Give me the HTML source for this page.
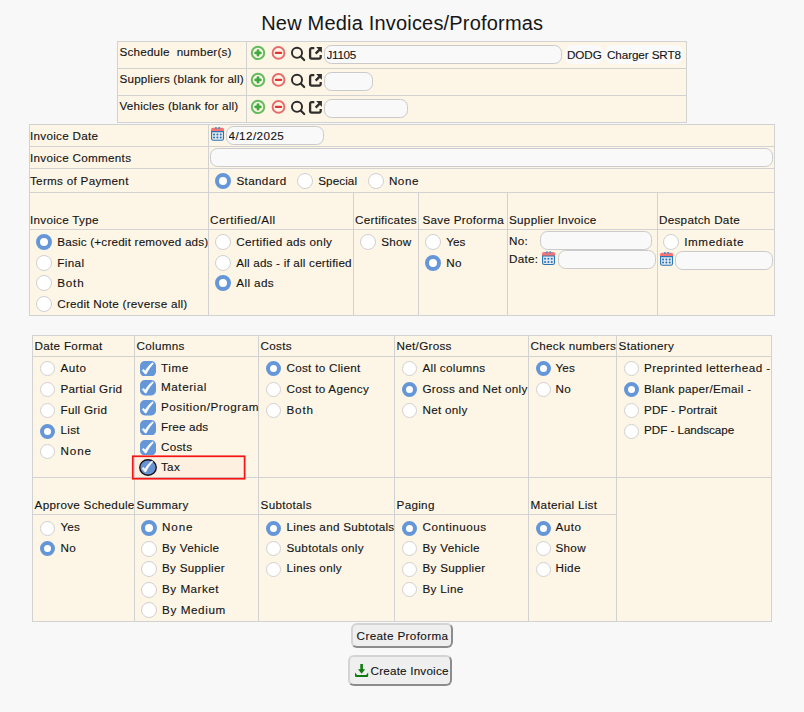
<!DOCTYPE html>
<html lang="en">
<head>
<meta charset="utf-8">
<title>New Media Invoices/Proformas</title>
<style>
html,body{margin:0;padding:0}
body{width:804px;height:712px;position:relative;overflow:hidden;background:#f8f8f8;color:#141414;
  font-family:"Liberation Sans","DejaVu Sans",sans-serif;font-size:11.7px;letter-spacing:0.28px;line-height:15px;-webkit-text-stroke:0.12px #141414}
h1{position:absolute;left:0;top:11px;width:804px;margin:0;text-align:center;font-weight:normal;
  font-size:20px;line-height:24px;color:#161616;-webkit-text-stroke:0;letter-spacing:.19px;padding-left:0.5px;box-sizing:border-box}
table{position:absolute;border-collapse:separate;border-spacing:0;table-layout:fixed;
  border-top:1px solid #d2d2d2;border-left:1px solid #d2d2d2;margin:0}
td,th{border-right:1px solid #d2d2d2;border-bottom:1px solid #d2d2d2;background:#fdf5e6;padding:0;
  font-weight:normal;text-align:left;vertical-align:top;white-space:nowrap;overflow:hidden;box-sizing:border-box}
input[type=text]{box-sizing:border-box;height:19px;margin:0;padding:0 2px 0 1.5px;border:1px solid #cacaca;border-radius:7.5px;
  background:#f9f9f9;font:inherit;color:#141414;vertical-align:top;outline:none}
svg{display:inline-block;vertical-align:top}
input[type=radio]{-webkit-appearance:none;appearance:none;box-sizing:border-box;width:15px;height:15px;margin:0 6px 0 5px;
  border:1px solid #d1d1d1;border-radius:50%;background:#fff;vertical-align:middle;position:relative;top:-1px;outline:none}
#t3 input[type=radio]{top:0;margin-right:5.5px}
#t3 .c5 input[type=radio]{margin-right:4.5px}
#t3 .c6 input[type=radio]{margin-right:5px}
input[type=radio]:checked{border:4px solid #6597d8;background:#fff}
label{display:block;white-space:nowrap}
/* table 1 */
#t1{left:117px;top:41px;width:570px}
#t1 td{height:27px}
#t1 td.l{padding:1.5px 0 0 1.5px;letter-spacing:.19px}
#t1 td.c{padding:3px 0 0 3px;font-size:0}
#t1 td.c svg.ic{margin-right:2px}
#t1 td.c svg{margin-top:0}
#t1 td.c input{font-size:11.7px}
.ro{display:inline-block;box-sizing:border-box;height:19px;line-height:19px;padding:0 0 0 2px;text-align:left;letter-spacing:-0.1px;border-radius:7px;background:#fafafa;font-size:11.7px;vertical-align:top}
/* table 2 */
#t2{left:29px;top:124px;width:746px}
#t2 td.l{padding-left:0}
#t2 .opt{padding:2px 0 0 1px}
#t2 .opt label{height:20.7px;line-height:20.7px}
#t2 .opt label:last-child,#t3 .opt label:last-child{height:17px}
#t2 input[type=radio]{width:16px;height:16px;margin-right:5.2px;top:-1px}
#t2 .terms label{font-size:11.7px;vertical-align:top}
#t2 .hd{height:37px;padding:0 0 2px 1px}
/* table 3 */
#t3{left:32px;top:335px;width:740px}
#t3 .opt{padding:1px 0 0 2px}
#t3 .opt label{height:20.75px;line-height:20.75px}
#t3 .o2 label{height:20.6px;line-height:20.6px}
#t3 .hd{padding:0 0 3px 1.6px}
#t3 .h2 .hd{padding-bottom:2px}
.hd{vertical-align:bottom}
/* checkbox */
#t3 .opt label.ck{position:relative;height:19.75px;line-height:19.75px}
#t3 .cols{padding-top:0}
#t3 .cols label.ck{top:0.5px}
#t3 .opt label.foc{padding-top:1px}
#t3 .opt label.foc svg{top:-1px}
#t3 .o2{padding-top:2.2px}
#t3 .o2b input[type=radio]{width:16px;height:16px;margin-left:4px;margin-right:5px}
#hl{position:absolute;left:130px;top:454px;pointer-events:none}
.ck input{position:absolute;opacity:0;width:1px;height:1px;margin:0}
.ck svg{vertical-align:middle;margin:0 5px 0 3px;position:relative;top:0}
button{position:absolute;box-sizing:border-box;margin:0;padding:0;font:inherit;color:#141414;background:#efefef;
  border:2px solid;border-color:#d4d4d4 #8c8c8c #8c8c8c #d4d4d4;border-radius:6px;text-align:center;white-space:nowrap}
</style>
</head>
<body>
<h1>New Media Invoices/Proformas</h1>

<table id="t1">
<colgroup><col style="width:129px"><col style="width:440px"></colgroup>
<tr><td class="l">Schedule&nbsp; number(s)</td><td class="c"><svg class="ic" width="72" height="17" viewBox="0 0 72 17"><circle cx="8" cy="7.9" r="6.2" fill="none" stroke="#66bc60" stroke-width="2"/><path d="M8 5.6v4.6M5.7 7.9h4.6" stroke="#3caa3c" stroke-width="2.8" stroke-linecap="round" fill="none"/><circle cx="28.5" cy="7.9" r="5.9" fill="none" stroke="#e96a6a" stroke-width="1.9"/><path d="M25.9 7.9h5.2" stroke="#e23434" stroke-width="2.2" stroke-linecap="round" fill="none"/><circle cx="47" cy="7.8" r="5.05" fill="none" stroke="#2c2c2c" stroke-width="1.95"/><path d="M50.7 11.5L54.2 15.1" stroke="#2c2c2c" stroke-width="2.1" stroke-linecap="round" fill="none"/><path d="M64.3 3.2H61.7a1.6 1.6 0 0 0-1.6 1.6v7.2a1.6 1.6 0 0 0 1.6 1.6h7.4a1.6 1.6 0 0 0 1.6-1.6V10" fill="none" stroke="#2e2e2e" stroke-width="2.3"/><path d="M66.2 2h5.7v5.8l-1.9-1.9-3.5 3.6-1.7-1.7 3.5-3.6z" fill="#2e2e2e"/></svg><input type="text" value="J1105" style="width:238px;letter-spacing:-0.3px"><span class="ro" style="margin-left:3px;width:38px">DODG</span><span class="ro" style="margin-left:2px;width:78px">Charger SRT8</span></td></tr>
<tr><td class="l">Suppliers (blank for all)</td><td class="c"><svg class="ic" width="72" height="17" viewBox="0 0 72 17"><circle cx="8" cy="7.9" r="6.2" fill="none" stroke="#66bc60" stroke-width="2"/><path d="M8 5.6v4.6M5.7 7.9h4.6" stroke="#3caa3c" stroke-width="2.8" stroke-linecap="round" fill="none"/><circle cx="28.5" cy="7.9" r="5.9" fill="none" stroke="#e96a6a" stroke-width="1.9"/><path d="M25.9 7.9h5.2" stroke="#e23434" stroke-width="2.2" stroke-linecap="round" fill="none"/><circle cx="47" cy="7.8" r="5.05" fill="none" stroke="#2c2c2c" stroke-width="1.95"/><path d="M50.7 11.5L54.2 15.1" stroke="#2c2c2c" stroke-width="2.1" stroke-linecap="round" fill="none"/><path d="M64.3 3.2H61.7a1.6 1.6 0 0 0-1.6 1.6v7.2a1.6 1.6 0 0 0 1.6 1.6h7.4a1.6 1.6 0 0 0 1.6-1.6V10" fill="none" stroke="#2e2e2e" stroke-width="2.3"/><path d="M66.2 2h5.7v5.8l-1.9-1.9-3.5 3.6-1.7-1.7 3.5-3.6z" fill="#2e2e2e"/></svg><input type="text" style="width:49px"></td></tr>
<tr><td class="l">Vehicles (blank for all)</td><td class="c"><svg class="ic" width="72" height="17" viewBox="0 0 72 17"><circle cx="8" cy="7.9" r="6.2" fill="none" stroke="#66bc60" stroke-width="2"/><path d="M8 5.6v4.6M5.7 7.9h4.6" stroke="#3caa3c" stroke-width="2.8" stroke-linecap="round" fill="none"/><circle cx="28.5" cy="7.9" r="5.9" fill="none" stroke="#e96a6a" stroke-width="1.9"/><path d="M25.9 7.9h5.2" stroke="#e23434" stroke-width="2.2" stroke-linecap="round" fill="none"/><circle cx="47" cy="7.8" r="5.05" fill="none" stroke="#2c2c2c" stroke-width="1.95"/><path d="M50.7 11.5L54.2 15.1" stroke="#2c2c2c" stroke-width="2.1" stroke-linecap="round" fill="none"/><path d="M64.3 3.2H61.7a1.6 1.6 0 0 0-1.6 1.6v7.2a1.6 1.6 0 0 0 1.6 1.6h7.4a1.6 1.6 0 0 0 1.6-1.6V10" fill="none" stroke="#2e2e2e" stroke-width="2.3"/><path d="M66.2 2h5.7v5.8l-1.9-1.9-3.5 3.6-1.7-1.7 3.5-3.6z" fill="#2e2e2e"/></svg><input type="text" style="width:84px"></td></tr>
</table>

<table id="t2">
<colgroup><col style="width:179px"><col style="width:145px"><col style="width:65px"><col style="width:89px"><col style="width:150px"><col style="width:117px"></colgroup>
<tr style="height:22px"><td class="l" style="padding-top:3px">Invoice Date</td><td colspan="5" style="padding:1px 0 0 2px;font-size:0"><svg class="cal" width="14" height="14" viewBox="0 0 14 14" style="margin-top:1px"><path d="M0 4.8V2.6a1.8 1.8 0 0 1 1.8-1.8h9.5a1.8 1.8 0 0 1 1.8 1.8v2.2z" fill="#fb7272"/><rect x="4" y="0" width="1.8" height="2.1" rx="0.6" fill="#4a90c8"/><rect x="7.3" y="0" width="1.8" height="2.1" rx="0.6" fill="#4a90c8"/><path d="M0.55 4.65h11.95v6.8a1.8 1.8 0 0 1-1.8 1.8h-8.35a1.8 1.8 0 0 1-1.8-1.8z" fill="#e4e9ee" stroke="#2a76b4" stroke-width="1.1"/><circle cx="3.05" cy="7.4" r="1" fill="#2172b9"/><circle cx="6.4" cy="7.4" r="1" fill="#2172b9"/><circle cx="9.75" cy="7.4" r="1" fill="#2172b9"/><circle cx="3.05" cy="10.6" r="1" fill="#2172b9"/><circle cx="6.4" cy="10.6" r="1" fill="#2172b9"/><circle cx="9.75" cy="10.6" r="1" fill="#2172b9"/></svg><input type="text" value="4/12/2025" style="width:98px;margin-left:1px;font-size:11.7px;letter-spacing:.42px"></td></tr>
<tr style="height:22px"><td class="l" style="padding-top:3px">Invoice Comments</td><td colspan="5" style="padding:1px 0 0 1px"><input type="text" style="width:563px"></td></tr>
<tr style="height:24px"><td class="l" style="padding-top:4px">Terms of Payment</td><td colspan="5" class="terms" style="padding:1px 0 0 1px;line-height:21px;font-size:0"><label style="display:inline-block;width:82.1px"><input type="radio" name="terms" checked style="margin-right:5.4px"><span style="letter-spacing:.35px">Standard</span></label><label style="display:inline-block;width:70.6px"><input type="radio" name="terms" style="margin-right:5.1px"><span style="letter-spacing:.08px">Special</span></label><label style="display:inline-block"><input type="radio" name="terms" style="margin-right:5.2px"><span style="letter-spacing:.55px">None</span></label></td></tr>
<tr><th class="hd" style="padding-left:0">Invoice Type</th><th class="hd" style="letter-spacing:.45px">Certified/All</th><th class="hd">Certificates</th><th class="hd" style="padding-left:3.5px">Save Proforma</th><th class="hd">Supplier Invoice</th><th class="hd">Despatch Date</th></tr>
<tr style="height:86px">
<td class="opt"><label><input type="radio" name="itype" checked><span style="letter-spacing:.2px">Basic (+credit removed ads)</span></label><label><input type="radio" name="itype"><span style="letter-spacing:0.4px">Final</span></label><label><input type="radio" name="itype"><span style="letter-spacing:0.8px">Both</span></label><label><input type="radio" name="itype"><span style="letter-spacing:0.25px">Credit Note (reverse all)</span></label></td>
<td class="opt"><label><input type="radio" name="cert"><span style="letter-spacing:0.32px">Certified ads only</span></label><label><input type="radio" name="cert"><span style="letter-spacing:0.2px">All ads - if all certified</span></label><label><input type="radio" name="cert" checked><span style="letter-spacing:0.4px">All ads</span></label></td>
<td class="opt"><label><input type="radio" name="certs">Show</label></td>
<td class="opt"><label><input type="radio" name="savep"><span style="letter-spacing:0.1px">Yes</span></label><label><input type="radio" name="savep" checked>No</label></td>
<td style="padding:1px 0 0 1px"><div style="height:19px;line-height:19px">No:<input type="text" style="width:112px;margin-left:12px"></div><div style="height:19px;line-height:17px">Date:<svg class="cal" width="14" height="14" viewBox="0 0 14 14" style="margin:1px 2px 0 4px;width:14px;height:14.6px"><path d="M0 4.8V2.6a1.8 1.8 0 0 1 1.8-1.8h9.5a1.8 1.8 0 0 1 1.8 1.8v2.2z" fill="#fb7272"/><rect x="4" y="0" width="1.8" height="2.1" rx="0.6" fill="#4a90c8"/><rect x="7.3" y="0" width="1.8" height="2.1" rx="0.6" fill="#4a90c8"/><path d="M0.55 4.65h11.95v6.8a1.8 1.8 0 0 1-1.8 1.8h-8.35a1.8 1.8 0 0 1-1.8-1.8z" fill="#e4e9ee" stroke="#2a76b4" stroke-width="1.1"/><circle cx="3.05" cy="7.4" r="1" fill="#2172b9"/><circle cx="6.4" cy="7.4" r="1" fill="#2172b9"/><circle cx="9.75" cy="7.4" r="1" fill="#2172b9"/><circle cx="3.05" cy="10.6" r="1" fill="#2172b9"/><circle cx="6.4" cy="10.6" r="1" fill="#2172b9"/><circle cx="9.75" cy="10.6" r="1" fill="#2172b9"/></svg><input type="text" style="width:98px"></div></td>
<td style="padding:1px 0 0 1px"><label style="height:20px;line-height:22px"><input type="radio" name="desp" style="margin-left:4px"><span style="letter-spacing:.6px">Immediate</span></label><div style="height:19px;font-size:0"><svg class="cal" width="14" height="14" viewBox="0 0 14 14" style="margin:1px 1px 0 1px"><path d="M0 4.8V2.6a1.8 1.8 0 0 1 1.8-1.8h9.5a1.8 1.8 0 0 1 1.8 1.8v2.2z" fill="#fb7272"/><rect x="4" y="0" width="1.8" height="2.1" rx="0.6" fill="#4a90c8"/><rect x="7.3" y="0" width="1.8" height="2.1" rx="0.6" fill="#4a90c8"/><path d="M0.55 4.65h11.95v6.8a1.8 1.8 0 0 1-1.8 1.8h-8.35a1.8 1.8 0 0 1-1.8-1.8z" fill="#e4e9ee" stroke="#2a76b4" stroke-width="1.1"/><circle cx="3.05" cy="7.4" r="1" fill="#2172b9"/><circle cx="6.4" cy="7.4" r="1" fill="#2172b9"/><circle cx="9.75" cy="7.4" r="1" fill="#2172b9"/><circle cx="3.05" cy="10.6" r="1" fill="#2172b9"/><circle cx="6.4" cy="10.6" r="1" fill="#2172b9"/><circle cx="9.75" cy="10.6" r="1" fill="#2172b9"/></svg><input type="text" style="width:98px;font-size:11.7px"></div></td>
</tr>
</table>

<table id="t3">
<colgroup><col style="width:102px"><col style="width:124px"><col style="width:136px"><col style="width:134px"><col style="width:88px"><col style="width:155px"></colgroup>
<tr style="height:21px"><th class="hd">Date Format</th><th class="hd">Columns</th><th class="hd">Costs</th><th class="hd">Net/Gross</th><th class="hd">Check numbers</th><th class="hd">Stationery</th></tr>
<tr style="height:121px">
<td class="opt"><label><input type="radio" name="dfmt"><span style="letter-spacing:0.5px">Auto</span></label><label><input type="radio" name="dfmt">Partial Grid</label><label><input type="radio" name="dfmt">Full Grid</label><label><input type="radio" name="dfmt" checked><span style="letter-spacing:0.3px">List</span></label><label><input type="radio" name="dfmt"><span style="letter-spacing:0.85px">None</span></label></td>
<td class="opt cols" style="overflow:visible;position:relative">
<label class="ck"><input type="checkbox" checked><svg width="16" height="15.5" viewBox="0 0 16 15.5"><rect x="0" y="0" width="16" height="15.5" rx="4.8" fill="#6597d8"/><path transform="translate(.4 0)" d="M1.8 9.5L3.1 8.2L4.9 10C6.8 6.5 9.4 3.6 12.2 1.7L13.1 2.5C10.1 5.6 7.7 9 5.8 13.1L4.8 13.1Z" fill="#fff" stroke="#fff" stroke-width="0.5" stroke-linejoin="round"/></svg><span style="letter-spacing:.6px">Time</span></label>
<label class="ck"><input type="checkbox" checked><svg width="16" height="15.5" viewBox="0 0 16 15.5"><rect x="0" y="0" width="16" height="15.5" rx="4.8" fill="#6597d8"/><path transform="translate(.4 0)" d="M1.8 9.5L3.1 8.2L4.9 10C6.8 6.5 9.4 3.6 12.2 1.7L13.1 2.5C10.1 5.6 7.7 9 5.8 13.1L4.8 13.1Z" fill="#fff" stroke="#fff" stroke-width="0.5" stroke-linejoin="round"/></svg><span style="letter-spacing:.55px">Material</span></label>
<label class="ck"><input type="checkbox" checked><svg width="16" height="15.5" viewBox="0 0 16 15.5"><rect x="0" y="0" width="16" height="15.5" rx="4.8" fill="#6597d8"/><path transform="translate(.4 0)" d="M1.8 9.5L3.1 8.2L4.9 10C6.8 6.5 9.4 3.6 12.2 1.7L13.1 2.5C10.1 5.6 7.7 9 5.8 13.1L4.8 13.1Z" fill="#fff" stroke="#fff" stroke-width="0.5" stroke-linejoin="round"/></svg><span style="letter-spacing:.52px">Position/Program</span></label>
<label class="ck"><input type="checkbox" checked><svg width="16" height="15.5" viewBox="0 0 16 15.5"><rect x="0" y="0" width="16" height="15.5" rx="4.8" fill="#6597d8"/><path transform="translate(.4 0)" d="M1.8 9.5L3.1 8.2L4.9 10C6.8 6.5 9.4 3.6 12.2 1.7L13.1 2.5C10.1 5.6 7.7 9 5.8 13.1L4.8 13.1Z" fill="#fff" stroke="#fff" stroke-width="0.5" stroke-linejoin="round"/></svg><span style="letter-spacing:.15px">Free ads</span></label>
<label class="ck"><input type="checkbox" checked><svg width="16" height="15.5" viewBox="0 0 16 15.5"><rect x="0" y="0" width="16" height="15.5" rx="4.8" fill="#6597d8"/><path transform="translate(.4 0)" d="M1.8 9.5L3.1 8.2L4.9 10C6.8 6.5 9.4 3.6 12.2 1.7L13.1 2.5C10.1 5.6 7.7 9 5.8 13.1L4.8 13.1Z" fill="#fff" stroke="#fff" stroke-width="0.5" stroke-linejoin="round"/></svg>Costs</label>
<label class="ck foc"><input type="checkbox" checked><svg width="18" height="17" viewBox="0 0 18 17" style="margin:0 4px 0 2px"><ellipse cx="9" cy="8.45" rx="8.25" ry="7.75" fill="#6496d8" stroke="#14141c" stroke-width="1.4"/><path transform="translate(1.3 0.4) scale(.96)" d="M1.8 9.5L3.1 8.2L4.9 10C6.8 6.5 9.4 3.6 12.2 1.7L13.1 2.5C10.1 5.6 7.7 9 5.8 13.1L4.8 13.1Z" fill="#fff" stroke="#fff" stroke-width="0.5" stroke-linejoin="round"/></svg>Tax</label>
</td>
<td class="opt"><label><input type="radio" name="costs" checked>Cost to Client</label><label><input type="radio" name="costs">Cost to Agency</label><label><input type="radio" name="costs"><span style="letter-spacing:0.8px">Both</span></label></td>
<td class="opt"><label><input type="radio" name="ng">All columns</label><label><input type="radio" name="ng" checked>Gross and Net only</label><label><input type="radio" name="ng">Net only</label></td>
<td class="opt c5"><label><input type="radio" name="chk" checked><span style="letter-spacing:0.1px">Yes</span></label><label><input type="radio" name="chk">No</label></td>
<td class="opt c6"><label><input type="radio" name="stat"><span style="letter-spacing:.45px">Preprinted letterhead -</span></label><label><input type="radio" name="stat" checked>Blank paper/Email -</label><label><input type="radio" name="stat"><span style="letter-spacing:.12px">PDF - Portrait</span></label><label><input type="radio" name="stat"><span style="letter-spacing:-.05px">PDF - Landscape</span></label></td>
</tr>
<tr style="height:37px" class="h2"><th class="hd">Approve Schedule</th><th class="hd">Summary</th><th class="hd">Subtotals</th><th class="hd">Paging</th><th class="hd">Material List</th><td rowspan="2"></td></tr>
<tr style="height:107px">
<td class="opt o2"><label><input type="radio" name="appr"><span style="letter-spacing:0.1px">Yes</span></label><label><input type="radio" name="appr" checked>No</label></td>
<td class="opt o2 o2b"><label><input type="radio" name="summ" checked><span style="letter-spacing:0.85px">None</span></label><label><input type="radio" name="summ">By Vehicle</label><label><input type="radio" name="summ">By Supplier</label><label><input type="radio" name="summ"><span style="letter-spacing:0.5px">By Market</span></label><label><input type="radio" name="summ"><span style="letter-spacing:0.6px">By Medium</span></label></td>
<td class="opt o2"><label><input type="radio" name="subt" checked>Lines and Subtotals</label><label><input type="radio" name="subt">Subtotals only</label><label><input type="radio" name="subt">Lines only</label></td>
<td class="opt o2"><label><input type="radio" name="pag" checked><span style="letter-spacing:0.5px">Continuous</span></label><label><input type="radio" name="pag">By Vehicle</label><label><input type="radio" name="pag">By Supplier</label><label><input type="radio" name="pag">By Line</label></td>
<td class="opt o2 c5"><label><input type="radio" name="matl" checked><span style="letter-spacing:0.5px">Auto</span></label><label><input type="radio" name="matl">Show</label><label><input type="radio" name="matl">Hide</label></td>
</tr>
</table>

<svg id="hl" width="118" height="28" viewBox="0 0 118 28"><rect x="2.78" y="2.28" width="111.85" height="22.45" fill="rgba(255,0,0,0.02)" stroke="#f21616" stroke-width="1.75"/></svg>
<button type="button" style="left:351px;top:623px;width:102px;height:25px;line-height:20px;letter-spacing:.36px;padding-left:1px">Create Proforma</button>
<button type="button" style="left:348px;top:655px;width:104px;height:31px;line-height:26px;text-align:left;padding-left:5px;letter-spacing:.2px"><svg width="14" height="14" viewBox="0 0 14 14" style="vertical-align:top;margin:6px 1.5px 0 0"><path d="M5.3 0h2.6v5.2h2.3L6.6 9.8 3.1 5.2h2.2z" fill="#107c10"/><path d="M0 8.4L2.1 11h9l2.1-2.6v3.7a1 1 0 0 1-1 1H1a1 1 0 0 1-1-1z" fill="#107c10"/></svg>Create Invoice</button>
</body>
</html>
